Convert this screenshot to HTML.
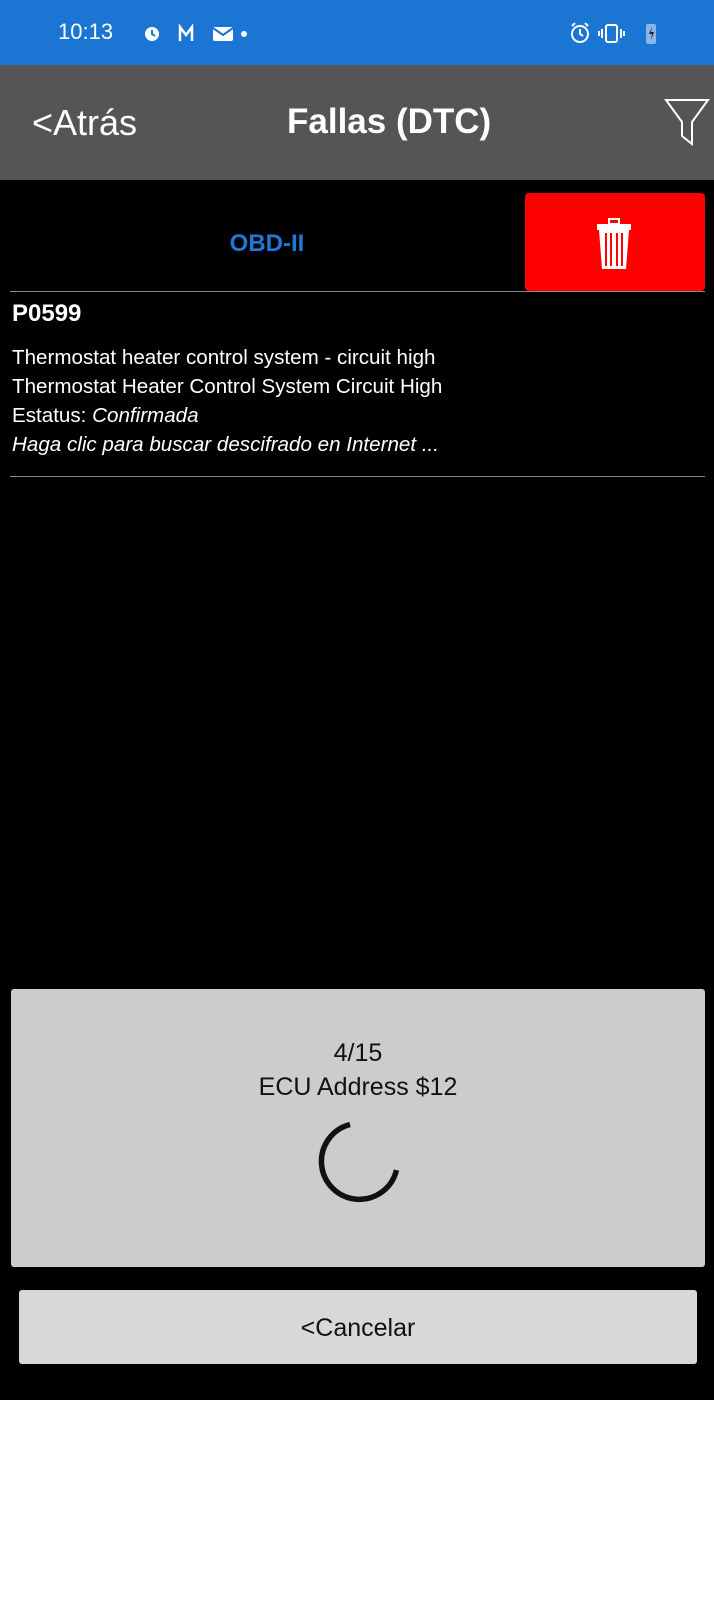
<!DOCTYPE html>
<html><head><meta charset="utf-8"><style>
*{margin:0;padding:0;box-sizing:border-box}
body{width:714px;height:1599px;background:#fff;font-family:"Liberation Sans",sans-serif;position:relative;overflow:hidden}
.abs{position:absolute}
</style></head><body>
<div class="abs" style="left:0;top:0;width:714px;height:65px;background:#1a76d2"></div>
<div class="abs" style="left:58px;top:19px;color:#fff;font-size:22px">10:13</div>
<svg class="abs" style="left:140px;top:20px" width="110" height="26" viewBox="0 0 110 26">
<circle cx="12" cy="14" r="7" fill="#fff"/><path d="M12 10v4l3 2" stroke="#1a76d2" stroke-width="2" fill="none"/>
<path d="M40 21V7l6 8 6-8v14" stroke="#fff" stroke-width="2.5" fill="none"/>
<rect x="73" y="7" width="20" height="14" rx="2" fill="#fff"/><path d="M73 8l10 7 10-7" stroke="#1a76d2" stroke-width="2" fill="none"/>
<circle cx="104" cy="14" r="3" fill="#fff"/></svg>
<svg class="abs" style="left:568px;top:20px" width="95" height="26" viewBox="0 0 95 26">
<circle cx="12" cy="14" r="8" stroke="#fff" stroke-width="2" fill="none"/><path d="M12 9v5l3 2M4 6l3-3M20 6l-3-3" stroke="#fff" stroke-width="2" fill="none"/>
<rect x="38" y="5" width="11" height="17" rx="2" stroke="#fff" stroke-width="2" fill="none"/><path d="M34 9v9M53 9v9M31 11v5M56 11v5" stroke="#fff" stroke-width="2"/>
<rect x="78" y="4" width="10" height="20" rx="2" fill="#8ab4ea"/><path d="M84 7l-3 7h3l-1 6 3-8h-3z" fill="#222"/></svg>
<div class="abs" style="left:0;top:65px;width:714px;height:115px;background:#555"></div>
<div class="abs" style="left:32px;top:102px;color:#fff;font-size:36px">&lt;Atrás</div>
<div class="abs" style="left:287px;top:102px;color:#fff;font-size:35px;font-weight:bold">Fallas (DTC)</div>
<svg class="abs" style="left:664px;top:98px" width="46" height="48" viewBox="0 0 46 48"><path d="M2 2h42L28 24v22l-10-8V24z" stroke="#fff" stroke-width="2" fill="none"/></svg>
<div class="abs" style="left:0;top:180px;width:714px;height:1220px;background:#000"></div>
<div class="abs" style="left:525px;top:193px;width:180px;height:98px;background:#fe0000;border-radius:4px"></div>
<svg class="abs" style="left:595px;top:218px" width="38" height="52" viewBox="0 0 38 52"><rect x="14" y="1" width="10" height="5" stroke="#fff" stroke-width="2" fill="none"/><rect x="2" y="6" width="34" height="6" fill="#fff"/><path d="M4 12h30l-3 39H7z" fill="#fff"/><path d="M11 15v33M16 15v33M22 15v33M27 15v33" stroke="#fe0000" stroke-width="2"/></svg>
<div class="abs" style="left:0;width:534px;text-align:center;top:230px;color:#1f78d8;font-size:24px;font-weight:bold">OBD-II</div>
<div class="abs" style="left:10px;top:291px;width:695px;height:1px;background:#888"></div>
<div class="abs" style="left:12px;top:300px;color:#fff;font-size:24px;font-weight:bold">P0599</div>
<div class="abs" style="left:12px;top:343px;color:#fff;font-size:20.6px;line-height:29px">Thermostat heater control system - circuit high<br>Thermostat Heater Control System Circuit High<br>Estatus: <i>Confirmada</i><br><i>Haga clic para buscar descifrado en Internet ...</i></div>
<div class="abs" style="left:10px;top:476px;width:695px;height:1px;background:#888"></div>
<div class="abs" style="left:11px;top:989px;width:694px;height:278px;background:#cccccc;border-radius:3px"></div>
<div class="abs" style="left:11px;width:694px;text-align:center;top:1036px;color:#111;font-size:25px;line-height:34px">4/15<br>ECU Address $12</div>
<svg class="abs" style="left:315px;top:1120px" width="84" height="84" viewBox="0 0 84 84"><path d="M78 60A38 38 0 1 1 45 4" stroke="#111" stroke-width="5.5" fill="none" transform="rotate(-15 42 42)"/></svg>
<div class="abs" style="left:19px;top:1290px;width:678px;height:74px;background:#d7d8d8;border-radius:3px"></div>
<div class="abs" style="left:19px;width:678px;text-align:center;top:1314px;color:#111;font-size:25px">&lt;Cancelar</div>
</body></html>
